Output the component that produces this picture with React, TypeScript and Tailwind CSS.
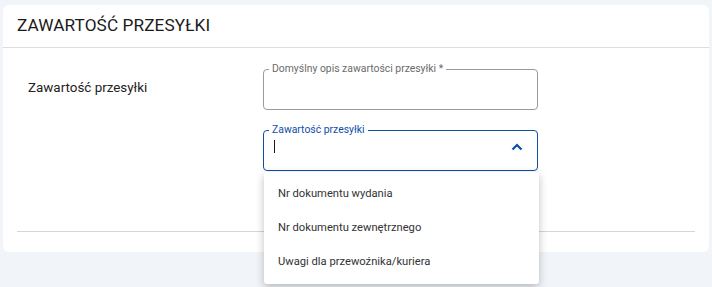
import React from "react";

export default function App() {
  const font = { fontFamily: "Roboto, 'Noto Sans', sans-serif" };
  return (
    <div className="relative h-[287px] w-[712px] bg-[#f1f5f9] px-[3px] pt-[5px]" style={font}>
      <div className="w-[706px] rounded-[6px] bg-white">
        <div className="flex h-[43px] items-center border-b border-[#dddddd] px-[14px]">
          <h2 className="text-[17.2px] font-normal tracking-[0.1px] text-[#1a1a1a]">ZAWARTOŚĆ PRZESYŁKI</h2>
        </div>
        <div className="px-[14px]">
          <div className="flex pt-[15px] pb-[60px]">
            <div className="w-[246px] pl-[11px] pt-[15px] text-[13.4px] text-[#222]">Zawartość przesyłki</div>
            <div className="flex w-[275px] flex-col gap-[14px]">
              <fieldset className="h-[47px] rounded-[4px] border border-[#9a9a9a] px-[7px]">
                <legend className="ml-[-2px] px-[3px] text-[10.4px] leading-[12px] text-[#6b6b6b]">
                  Domyślny opis zawartości przesyłki *
                </legend>
              </fieldset>
              <fieldset className="relative h-[47px] rounded-[4px] border border-[#0d4ea6] px-[7px]">
                <legend className="ml-[-2px] px-[3px] text-[10.4px] leading-[12px] text-[#0d4ea6]">
                  Zawartość przesyłki
                </legend>
                <div className="flex h-[21px] items-center justify-between pl-[3px] pr-[7px]">
                  <span className="block h-[13px] w-[1px] bg-[#1a1a1a]" />
                  <svg width="12" height="8" viewBox="0 0 12 8" fill="none">
                    <path d="M1.5 6.5 L6 2 L10.5 6.5" stroke="#0d4ea6" strokeWidth="2.2" />
                  </svg>
                </div>
              </fieldset>
            </div>
          </div>
          <div className="border-t border-[#d6d6d6]" />
          <div className="h-[20px]" />
        </div>
      </div>
      <div className="absolute left-[264px] top-[172px] flex h-[112px] w-[275px] flex-col rounded-[3px] bg-white pt-[5px] shadow-[0_3px_8px_rgba(0,0,0,0.25)]">
        {["Nr dokumentu wydania", "Nr dokumentu zewnętrznego", "Uwagi dla przewoźnika/kuriera"].map((t) => (
          <div key={t} className="flex h-[34px] shrink-0 items-center px-[14px] text-[11.2px] text-[#333]">
            {t}
          </div>
        ))}
      </div>
    </div>
  );
}
